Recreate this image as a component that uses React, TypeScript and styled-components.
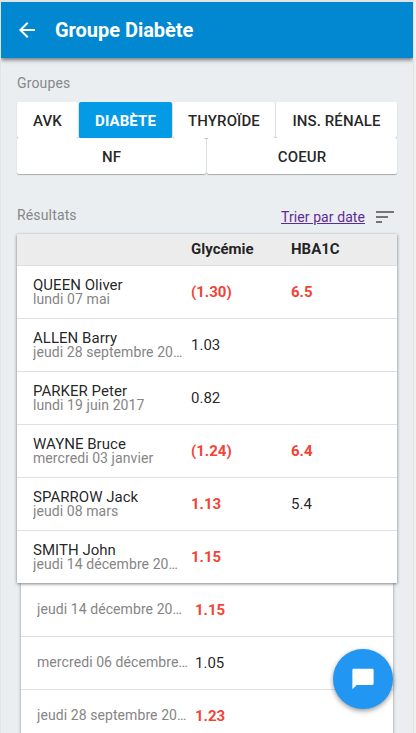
import React from "react";
import styled, { createGlobalStyle } from "styled-components";

const GlobalStyle = createGlobalStyle`
  *, *::before, *::after { box-sizing: border-box; }
  html, body { margin: 0; height: 100%; overflow: hidden; background: #f0f0f0; }
  body { font-family: Roboto, "Liberation Sans", sans-serif; font-size: 15px; color: rgba(0, 0, 0, 0.87); }
`;

const Screen = styled.div`
  position: relative;
  height: 733px;
  margin-right: 2px;
  border: solid #e1e3e5;
  border-width: 2px 1px 0 1px;
  background: #eaeef1;
  overflow: hidden;
`;

const AppBar = styled.header`
  height: 56px;
  padding-left: 14px;
  display: flex;
  align-items: center;
  gap: 16px;
  background: #0288d1;
  color: #fff;
  box-shadow: 0 2px 4px rgba(0, 0, 0, 0.5);
`;

const Title = styled.h1`
  margin: 0;
  font-size: 20px;
  line-height: 24px;
  font-weight: 700;
  letter-spacing: -0.03px;
`;

const Content = styled.main`
  padding: 0 16px;
`;

const Label = styled.h2`
  margin: 0;
  font-size: 14px;
  line-height: 20px;
  font-weight: 400;
  letter-spacing: 0.15px;
  color: #868889;
`;

const GroupSection = styled.section`
  padding-top: 15px;
`;

const Buttons = styled.div`
  margin-top: 9px;
`;

const ButtonRow = styled.div<{ $columns: string }>`
  display: grid;
  grid-template-columns: ${(p) => p.$columns};
  column-gap: 1px;
`;

const GroupButton = styled.button<{ $active?: boolean }>`
  height: 36px;
  padding: 2px 0 0 0;
  border: 0;
  border-radius: 2px;
  background: ${(p) => (p.$active ? "#039be5" : "#fff")};
  color: ${(p) => (p.$active ? "#fff" : "rgba(0, 0, 0, 0.87)")};
  font: ${(p) => (p.$active ? 700 : 500)} 15px Roboto, sans-serif;
  letter-spacing: 0.1px;
  white-space: nowrap;
  box-shadow: 0 1px 1px rgba(0, 0, 0, 0.28);
`;

const ResultBar = styled.div`
  height: 60px;
  padding-top: 31px;
  display: flex;
  justify-content: space-between;
`;

const SortLink = styled.a`
  display: flex;
  gap: 11px;
  padding-top: 2px;
  height: 22px;
  font-size: 14px;
  line-height: 20px;
  letter-spacing: 0.08px;
  color: #5f2c94;
`;

const SortText = styled.span`
  text-decoration: underline;
`;

const SortIcon = styled.svg`
  margin: 4px 3px 0 0;
`;

const Card = styled.section`
  height: 349px;
  position: relative;
  background: #fff;
  box-shadow: 0 1px 3px rgba(0, 0, 0, 0.5);
`;

const HistoryCard = styled.section`
  margin: 0 4px;
  padding-top: 1px;
  background: #fff;
  box-shadow: 0 1px 3px rgba(0, 0, 0, 0.4);
`;

const Row = styled.div`
  height: 53px;
  padding-left: 16px;
  display: grid;
  grid-template-columns: 158px 100px 1fr;
  align-items: center;
  border-bottom: 1px solid #e0e0e0;
  &:last-child { border-bottom-color: transparent; }
`;

const HeadRow = styled(Row)`
  height: 32px;
  padding-bottom: 1px;
  background: #ececec;
  font-size: 15px;
  font-weight: 700;
`;

const Person = styled.div<{ $named: boolean }>`
  min-width: 0;
  padding: ${(p) => (p.$named ? "0 7px 1px 0" : "0 7px 3px 0")};
`;

const Name = styled.div`
  font-size: 15px;
  line-height: 14px;
  letter-spacing: 0.03px;
`;

const DateText = styled.div`
  font-size: 14px;
  line-height: 14px;
  letter-spacing: 0.08px;
  color: #858585;
  white-space: nowrap;
  overflow: hidden;
  text-overflow: ellipsis;
  height: 17px;
  margin-bottom: -3px;
`;

const Value = styled.span<{ $alert?: boolean }>`
  font-size: 15px;
  font-weight: ${(p) => (p.$alert ? 700 : 400)};
  color: ${(p) => (p.$alert ? "#f44336" : "rgba(0, 0, 0, 0.87)")};
`;

const ChatButton = styled.button`
  position: absolute;
  left: 332px;
  top: 647px;
  width: 60px;
  height: 60px;
  padding: 0;
  border: 0;
  border-radius: 50%;
  display: flex;
  align-items: center;
  justify-content: center;
  background: #2196f3;
  box-shadow: 0 2px 5px rgba(0, 0, 0, 0.4);
`;

type Reading = { value: string; alert?: boolean };
type Result = { name?: string; date: string; glycemia: Reading; hba1c?: Reading };

const results: Result[] = [
  { name: "QUEEN Oliver", date: "lundi 07 mai", glycemia: { value: "(1.30)", alert: true }, hba1c: { value: "6.5", alert: true } },
  { name: "ALLEN Barry", date: "jeudi 28 septembre 2017", glycemia: { value: "1.03" } },
  { name: "PARKER Peter", date: "lundi 19 juin 2017", glycemia: { value: "0.82" } },
  { name: "WAYNE Bruce", date: "mercredi 03 janvier", glycemia: { value: "(1.24)", alert: true }, hba1c: { value: "6.4", alert: true } },
  { name: "SPARROW Jack", date: "jeudi 08 mars", glycemia: { value: "1.13", alert: true }, hba1c: { value: "5.4" } },
  { name: "SMITH John", date: "jeudi 14 décembre 2017", glycemia: { value: "1.15", alert: true } },
];

const history: Result[] = [
  { date: "jeudi 14 décembre 2017", glycemia: { value: "1.15", alert: true } },
  { date: "mercredi 06 décembre 2017", glycemia: { value: "1.05" } },
  { date: "jeudi 28 septembre 2017", glycemia: { value: "1.23", alert: true } },
];

function ResultRow({ result }: { result: Result }) {
  return (
    <Row>
      <Person $named={Boolean(result.name)}>
        {result.name && <Name>{result.name}</Name>}
        <DateText>{result.date}</DateText>
      </Person>
      <Value $alert={result.glycemia.alert}>{result.glycemia.value}</Value>
      {result.hba1c && <Value $alert={result.hba1c.alert}>{result.hba1c.value}</Value>}
    </Row>
  );
}

export default function App() {
  return (
    <>
      <GlobalStyle />
      <Screen>
        <AppBar>
          <svg width="24" height="24" viewBox="0 0 24 24" fill="#fff">
            <path d="M20 11H7.83l5.59-5.59L12 4l-8 8 8 8 1.41-1.41L7.83 13H20v-2z" />
          </svg>
          <Title>Groupe Diabète</Title>
        </AppBar>
        <Content>
          <GroupSection>
            <Label>Groupes</Label>
            <Buttons>
              <ButtonRow $columns="61px 93px 102px 1fr">
                <GroupButton>AVK</GroupButton>
                <GroupButton $active>DIABÈTE</GroupButton>
                <GroupButton>THYROÏDE</GroupButton>
                <GroupButton>INS. RÉNALE</GroupButton>
              </ButtonRow>
              <ButtonRow $columns="189px 1fr">
                <GroupButton>NF</GroupButton>
                <GroupButton>COEUR</GroupButton>
              </ButtonRow>
            </Buttons>
          </GroupSection>
          <ResultBar>
            <Label>Résultats</Label>
            <SortLink>
              <SortText>Trier par date</SortText>
              <SortIcon width="18" height="12" viewBox="0 0 18 12" fill="#757575">
                <path d="M0 12h6v-2H0v2zM0 0v2h18V0H0zm0 7h12V5H0v2z" />
              </SortIcon>
            </SortLink>
          </ResultBar>
          <Card>
            <HeadRow>
              <span />
              <span>Glycémie</span>
              <span>HBA1C</span>
            </HeadRow>
            {results.map((r) => (
              <ResultRow key={r.name} result={r} />
            ))}
          </Card>
          <HistoryCard>
            {history.map((r) => (
              <ResultRow key={r.date} result={r} />
            ))}
          </HistoryCard>
        </Content>
        <ChatButton aria-label="Message">
          <svg width="26" height="26" viewBox="0 0 24 24" fill="#fff">
            <path d="M20.500 2.500h-17c-.8 0-1.300.5-1.300 1.300V21.500l4-4h14.300c.8 0 1.300-.5 1.300-1.300V3.800c0-.8-.5-1.300-1.300-1.300z" />
          </svg>
        </ChatButton>
      </Screen>
    </>
  );
}
